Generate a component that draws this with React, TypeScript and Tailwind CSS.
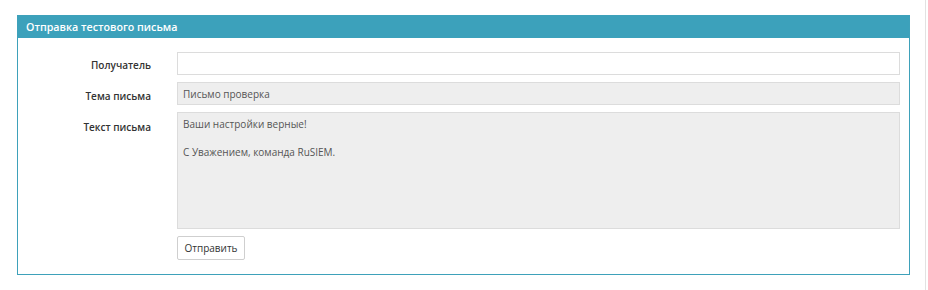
import React from "react";

export default function App() {
  const labelCls = "w-[133px] text-right text-[10px] font-semibold leading-[14px] text-[#333]";
  return (
    <div
      className="h-[290px] w-[926px] border-r border-[#e2e2e2] bg-white pl-[17px] pt-[15px]"
      style={{ fontFamily: '"Open Sans", "Noto Sans", sans-serif' }}
    >
      <div className="w-[893px] border border-[#3ea1ba]">
        <div className="h-[22px] bg-[#3ca1bb] pl-[8px] text-[10.7px] font-semibold leading-[22px] text-white">
          Отправка тестового письма
        </div>
        <div className="flex flex-col gap-[7px] pb-[14px] pr-[9px] pt-[14px]">
          <div className="flex items-start gap-[26px]">
            <label className={`${labelCls} pt-[6px]`}>Получатель</label>
            <input
              type="text"
              className="h-[23px] flex-1 border border-[#dcdcdc] bg-white px-[5px] text-[10px] text-[#555] outline-none"
            />
          </div>
          <div className="flex items-start gap-[26px]">
            <label className={`${labelCls} pt-[7px]`}>Тема письма</label>
            <input
              type="text"
              readOnly
              value="Письмо проверка"
              className="h-[23px] flex-1 border border-[#dcdcdc] bg-[#eeeeee] px-[5px] text-[10px] text-[#555] outline-none"
            />
          </div>
          <div className="flex items-start gap-[26px]">
            <label className={`${labelCls} pt-[8px]`}>Текст письма</label>
            <textarea
              readOnly
              value={"Ваши настройки верные!\n\nС Уважением, команда RuSIEM."}
              className="h-[117px] flex-1 resize-none border border-[#dcdcdc] bg-[#eeeeee] px-[5px] pt-[5px] text-[10px] leading-[13.8px] text-[#555] outline-none"
            />
          </div>
          <div className="flex gap-[26px]">
            <div className="w-[133px]" />
            <button className="h-[24px] w-[68px] rounded-[2px] border border-[#cfcfcf] bg-white text-[10px] font-medium text-[#333]">
              Отправить
            </button>
          </div>
        </div>
      </div>
    </div>
  );
}
